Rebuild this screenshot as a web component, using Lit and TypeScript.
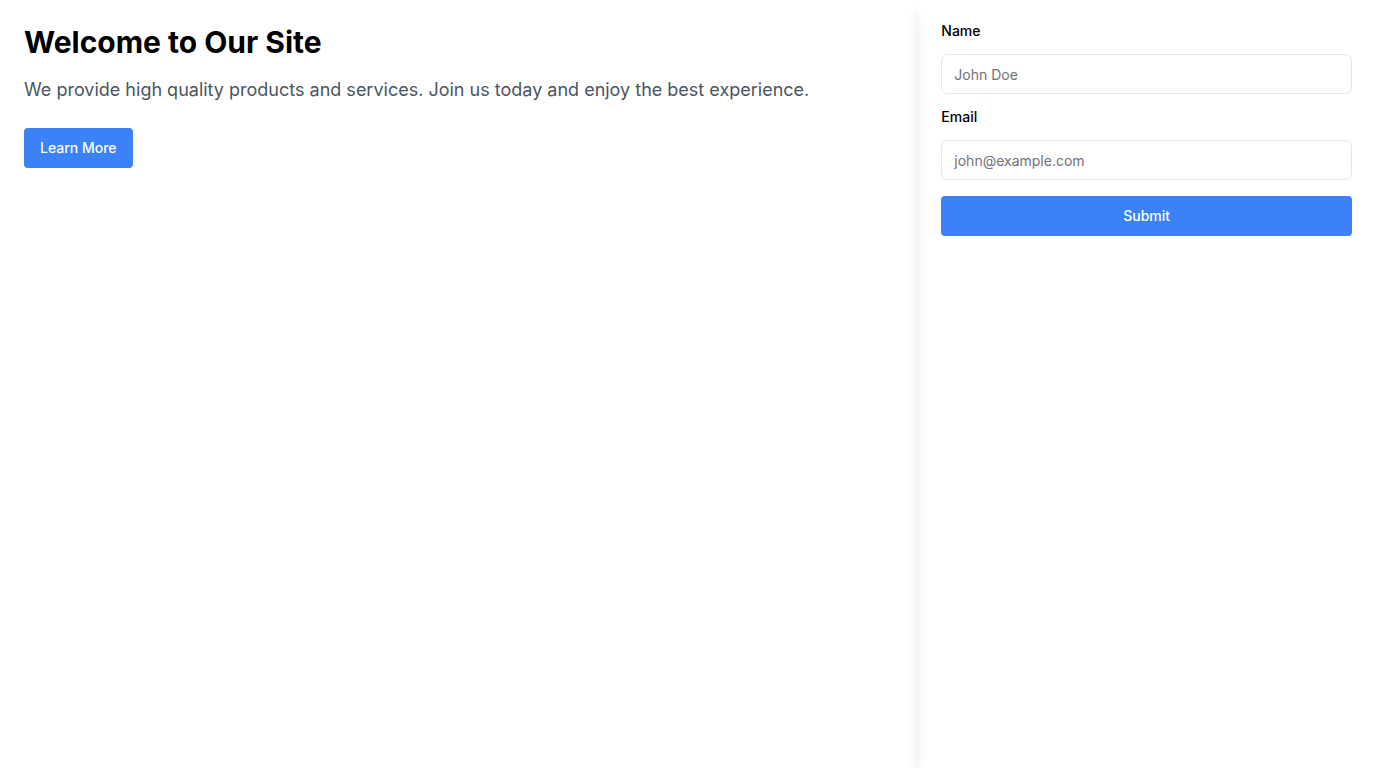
import { LitElement, html, css } from "lit";
import { customElement } from "lit/decorators.js";

@customElement("app-root")
export class AppRoot extends LitElement {
  static styles = css`
    :host {
      display: block;
      font-family: Inter, sans-serif;
      font-size: 16px;
      line-height: 24px;
      color: #000;
      background: #fff;
    }
    *,
    *::before,
    *::after {
      box-sizing: border-box;
    }
    .page {
      display: grid;
      grid-template-columns: 2fr 1fr;
      min-height: 100vh;
      overflow: hidden;
    }
    .panel {
      padding: 24px;
      box-shadow:
        0 10px 15px -3px rgb(0 0 0 / 0.1),
        0 4px 6px -4px rgb(0 0 0 / 0.1);
    }
    .title {
      margin: 0 0 16px;
      font-size: 30px;
      line-height: 36px;
      font-weight: 700;
    }
    .lead {
      margin: 0 0 24px;
      font-size: 18px;
      line-height: 28px;
      color: #4b5563;
    }
    .form,
    .field {
      display: flex;
      flex-direction: column;
      gap: 16px;
    }
    .label {
      font-size: 14px;
      line-height: 14px;
      font-weight: 500;
    }
    .input {
      width: 100%;
      height: 40px;
      padding: 8px 12px;
      border: 1px solid #e5e7eb;
      border-radius: 6px;
      background: #fff;
      color: inherit;
      font: inherit;
      font-size: 14px;
      line-height: 20px;
    }
    .input::placeholder {
      color: #71717a;
    }
    .button {
      height: 40px;
      padding: 8px 16px;
      border: 0;
      border-radius: 4px;
      background: #3b82f6;
      color: #fff;
      font: inherit;
      font-size: 14px;
      line-height: 20px;
      font-weight: 500;
      cursor: pointer;
    }
    .button:hover {
      background: #2563eb;
    }
  `;

  private handleSubmit(event: Event) {
    event.preventDefault();
  }

  render() {
    return html`
      <main class="page">
        <section class="panel">
          <h1 class="title">Welcome to Our Site</h1>
          <p class="lead">
            We provide high quality products and services. Join us today and enjoy the best experience.
          </p>
          <button class="button" type="button">Learn More</button>
        </section>
        <section class="panel">
          <form class="form" @submit=${this.handleSubmit}>
            <div class="field">
              <label class="label" for="name">Name</label>
              <input class="input" id="name" type="text" placeholder="John Doe" />
            </div>
            <div class="field">
              <label class="label" for="email">Email</label>
              <input class="input" id="email" type="email" placeholder="john@example.com" />
            </div>
            <button class="button" type="submit">Submit</button>
          </form>
        </section>
      </main>
    `;
  }
}
